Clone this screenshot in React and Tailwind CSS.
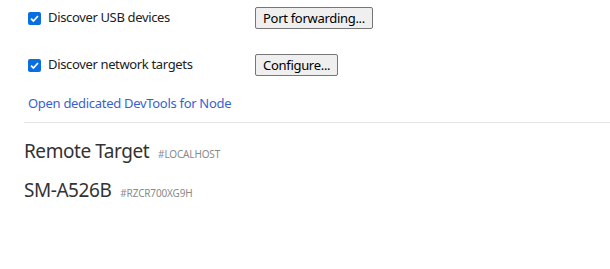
const font = { fontFamily: '"Noto Sans", "Open Sans", sans-serif' };

const Check = () => (
  <span className="flex h-[13px] w-[13px] shrink-0 items-center justify-center rounded-[2px] bg-[#0b6ee0]">
    <svg viewBox="0 0 12 12" className="h-[11px] w-[11px]">
      <path d="M2.2 6.2 L4.8 8.7 L9.8 3.3" fill="none" stroke="white" strokeWidth="1.9" />
    </svg>
  </span>
);

const OptionRow = ({ label, button, className }) => (
  <div className={`flex h-[22px] items-center ${className}`}>
    <div className="flex w-[227px] items-center">
      <Check />
      <span className="ml-[7px] text-[13px] tracking-[-0.35px] text-[#202124]">{label}</span>
    </div>
    <button
      type="button"
      className="h-[22px] rounded-[2px] border border-[#767676] bg-[#efefef] px-[7px] text-[13px] leading-none tracking-[-0.3px] text-black"
    >
      {button}
    </button>
  </div>
);

const Target = ({ name, id, className }) => (
  <div className={`flex items-baseline pl-[24px] ${className}`}>
    <span className="text-[19px] leading-[26px] tracking-[-0.45px] text-[#333333]">{name}</span>
    <span className="ml-[9px] text-[10px] uppercase tracking-[-0.15px] text-[#8a8a8a]">{id}</span>
  </div>
);

export default function App() {
  return (
    <div className="h-[269px] w-[610px] overflow-hidden bg-white" style={font}>
      <div className="pl-[28px]">
        <OptionRow label="Discover USB devices" button="Port forwarding..." className="mt-[7px]" />
        <OptionRow label="Discover network targets" button="Configure..." className="mt-[25px]" />
        <a className="mt-[19px] block text-[13px] leading-[17px] tracking-[-0.3px] text-[#3a5fd0]" href="#">
          Open dedicated DevTools for Node
        </a>
      </div>
      <div className="ml-[24px] mt-[10px] border-t border-[#e6e6e6]" />
      <Target name="Remote Target" id="#localhost" className="mt-[15px]" />
      <Target name="SM-A526B" id="#RZCR700XG9H" className="mt-[13px]" />
    </div>
  );
}
